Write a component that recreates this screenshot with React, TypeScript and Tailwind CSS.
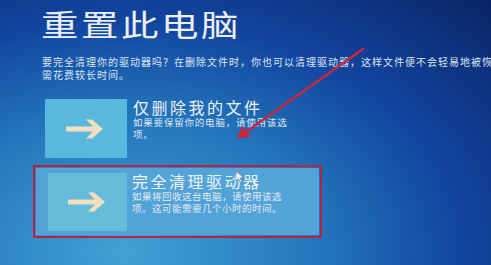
import React from 'react';

const cjk = { fontFamily: '"Noto Sans CJK SC", "Noto Sans", sans-serif' };

function TileArrow() {
  return (
    <svg width="40" height="22" viewBox="0 0 40 22">
      <path d="M0 8.5 H27 L20 1.5 H26 L37 11 L26 20.5 H20 L27 13.5 H0 Z" fill="#f3dfbd" />
    </svg>
  );
}

export default function App() {
  return (
    <div
      className="relative w-[491px] h-[265px] overflow-hidden bg-[radial-gradient(ellipse_at_25%_95%,#44a0d6_0%,#2476bc_38%,#1245a0_65%,#0a2466_100%)] text-[#e6eef8]"
      style={cjk}
    >
      {/* 标题 */}
      <div className="ml-[41px] mt-[8px] text-[30px] leading-none font-normal tracking-[2px] scale-x-[1.25] origin-left text-[#eaf0f6]">
        重置此电脑
      </div>

      {/* 说明 */}
      <div className="ml-[42px] mt-[17px] text-[10px] leading-[13px] tracking-[1px] text-[#dde6f2] whitespace-nowrap">
        <div>要完全清理你的驱动器吗？在删除文件时，你也可以清理驱动器，这样文件便不会轻易地被恢复</div>
        <div>需花费较长时间。</div>
      </div>

      {/* 选项一 */}
      <div className="ml-[45px] mt-[18px] flex gap-[6px]">
        <div className="w-[82px] h-[59px] bg-[#5ab8dc] flex items-center justify-center">
          <TileArrow />
        </div>
        <div className="flex flex-col">
          <div className="text-[16px] leading-[17px] tracking-[2.5px] text-[#eef4fa]">仅删除我的文件</div>
          <div className="text-[9.5px] leading-[12px] tracking-[0.8px] text-[#dfe8f2]">
            <div>如果要保留你的电脑，请使用该选</div>
            <div>项。</div>
          </div>
        </div>
      </div>

      {/* 选项二（红框） */}
      <div className="ml-[33px] mt-[7px] w-[289px] h-[73px] border-2 border-[#b8243e] p-[1px]">
        <div className="w-full h-full bg-[#52a3d8] flex gap-[5px] pl-[12px] pt-[5px]">
          <div className="w-[79px] h-[58px] bg-[#66bada] flex items-center justify-center">
            <TileArrow />
          </div>
          <div className="flex flex-col">
            <div className="text-[16px] leading-[17px] tracking-[2.5px] text-[#eef4fa]">完全清理驱动器</div>
            <div className="text-[9.5px] leading-[12px] tracking-[0.5px] text-[#e2eaf4]">
              <div>如果将回收这台电脑，请使用该选</div>
              <div>项。这可能需要几个小时的时间。</div>
            </div>
          </div>
        </div>
      </div>

      {/* 红色箭头和鼠标指针 */}
      <svg className="absolute inset-0 pointer-events-none" width="491" height="265" viewBox="0 0 491 265">
        <line x1="363" y1="49" x2="246" y2="132" stroke="#c8283e" strokeWidth="2.5" strokeLinecap="round" />
        <path d="M237 139 L242 126 L251 136 Z" fill="#c8283e" />
        <path d="M236 171 L236 181 L238.5 178.5 L240.5 182.5 L242 181.8 L240 178 L243.5 177.5 Z" fill="#f4f6f8" stroke="#556" strokeWidth="0.5" />
      </svg>
    </div>
  );
}
